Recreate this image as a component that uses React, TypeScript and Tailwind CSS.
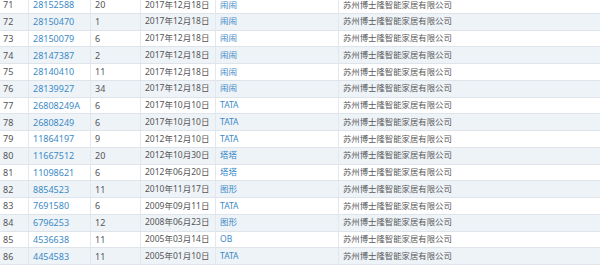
const rows = [
  ['71', '28152588', '20', '2017年12月18日', '闹闹'],
  ['72', '28150470', '1', '2017年12月18日', '闹闹'],
  ['73', '28150079', '6', '2017年12月18日', '闹闹'],
  ['74', '28147387', '2', '2017年12月18日', '闹闹'],
  ['75', '28140410', '11', '2017年12月18日', '闹闹'],
  ['76', '28139927', '34', '2017年12月18日', '闹闹'],
  ['77', '26808249A', '6', '2017年10月10日', 'TATA'],
  ['78', '26808249', '6', '2017年10月10日', 'TATA'],
  ['79', '11864197', '9', '2012年12月10日', 'TATA'],
  ['80', '11667512', '20', '2012年10月30日', '塔塔'],
  ['81', '11098621', '6', '2012年06月20日', '塔塔'],
  ['82', '8854523', '11', '2010年11月17日', '图形'],
  ['83', '7691580', '6', '2009年09月11日', 'TATA'],
  ['84', '6796253', '12', '2008年06月23日', '图形'],
  ['85', '4536638', '11', '2005年03月14日', 'OB'],
  ['86', '4454583', '11', '2005年01月10日', 'TATA'],
];

const company = '苏州博士隆智能家居有限公司';

export default function App() {
  return (
    <div className="w-[600px] h-[266px] overflow-hidden bg-white">
      <div
        className="mt-[-3px] text-[9px] text-[#555] leading-none"
        style={{ fontFamily: '"Noto Sans", "Noto Sans CJK SC", sans-serif' }}
      >
        {rows.map((r, i) => (
          <div
            key={r[0]}
            className={`flex h-[16.75px] border-b border-[#dfe4ea] ${i % 2 === 1 ? 'bg-[#eef3f8]' : 'bg-white'}`}
          >
            <div className="w-[29px] flex items-center pl-[3px] border-r border-[#e3e8ee]">{r[0]}</div>
            <div className="w-[62px] flex items-center pl-[4px] border-r border-[#e3e8ee] text-[#3b8ac6]">{r[1]}</div>
            <div className="w-[50px] flex items-center pl-[4px] border-r border-[#e3e8ee]">{r[2]}</div>
            <div className="w-[75px] flex items-center pl-[4px] border-r border-[#e3e8ee] text-[8.5px]">{r[3]}</div>
            <div className="w-[123px] flex items-center pl-[4px] border-r border-[#e3e8ee] text-[#3b8ac6] text-[8.5px]">{r[4]}</div>
            <div className="flex-1 flex items-center pl-[4px] text-[8.4px] text-[#5a5a5a]">{company}</div>
          </div>
        ))}
      </div>
    </div>
  );
}
